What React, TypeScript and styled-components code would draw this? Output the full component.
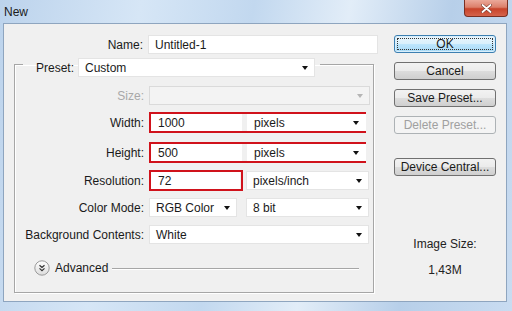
import styled, { createGlobalStyle } from 'styled-components'

const GlobalStyle = createGlobalStyle`
  html, body {
    margin: 0;
    padding: 0;
    background: #b9d1ea;
  }
  body {
    font-family: "Liberation Sans", Arial, sans-serif;
    font-size: 12px;
    color: #1a1a1a;
  }
`

const Window = styled.div`
  width: 512px;
  height: 311px;
  box-sizing: border-box;
  display: flex;
  flex-direction: column;
  padding: 0 5px 9px 3px;
  background: linear-gradient(100deg, #bcd3ec 0%, #d6e6f6 25%, #c2d8ef 45%, #e2edf8 62%, #b7cfe9 80%, #c9dcf1 100%);
`

const TitleBar = styled.div`
  height: 23px;
  display: flex;
  align-items: flex-start;
  justify-content: space-between;
`

const Title = styled.span`
  padding: 5px 0 0 1px;
  font-size: 12px;
  color: #1b1b1b;
`

const CloseButton = styled.div`
  width: 44px;
  height: 17px;
  margin-right: -1px;
  box-sizing: border-box;
  border: 1px solid #7a2f22;
  border-top: none;
  border-radius: 0 0 4px 4px;
  background: linear-gradient(#eba99a 0%, #dc7f6a 45%, #c8432a 55%, #d5634b 100%);
  display: flex;
  align-items: center;
  justify-content: center;
`

const Panel = styled.div`
  flex: 1;
  display: flex;
  background: #f0f0f0;
  border: 1px solid #8ea5bf;
  padding: 11px 0 0 10px;
`

const Main = styled.div`
  width: 364px;
  display: flex;
  flex-direction: column;
`

const Row = styled.div<{ $mt?: number }>`
  display: grid;
  grid-template-columns: 129px 1fr;
  column-gap: 5px;
  align-items: center;
  margin-top: ${p => p.$mt ?? 0}px;
`

const Label = styled.span<{ $disabled?: boolean }>`
  text-align: right;
  white-space: nowrap;
  color: ${p => (p.$disabled ? '#a8a8a8' : '#1a1a1a')};
`

const Field = styled.div<{ $w?: number; $disabled?: boolean }>`
  height: 19px;
  box-sizing: border-box;
  width: ${p => (p.$w ? `${p.$w}px` : 'auto')};
  flex: ${p => (p.$w ? 'none' : '1')};
  background: ${p => (p.$disabled ? '#f3f3f3' : '#ffffff')};
  border: 1px solid ${p => (p.$disabled ? '#dadada' : '#e4e4e4')};
  display: flex;
  align-items: center;
  padding: 0 6px 0 6px;
  color: #1a1a1a;
  white-space: nowrap;
`

const Value = styled.span`
  flex: 1;
`

const Arrow = styled.span<{ $disabled?: boolean }>`
  width: 0;
  height: 0;
  border-left: 3.5px solid transparent;
  border-right: 3.5px solid transparent;
  border-top: 4px solid ${p => (p.$disabled ? '#b5b5b5' : '#111')};
`

const Controls = styled.div<{ $gap: number }>`
  display: flex;
  align-items: center;
  gap: ${p => p.$gap}px;
`

const RedBox = styled.div<{ $w: number }>`
  width: ${p => p.$w}px;
  height: 21px;
  box-sizing: border-box;
  border: 2px solid #d0121b;
  display: flex;
  align-items: center;
  gap: 5px;
  padding: 0 1px 0 0;

  & > div {
    height: 17px;
    border-color: #ffffff;
  }
`

const Group = styled.fieldset`
  margin: -3px 4px 0 0;
  padding: 0;
  border: 1px solid #a6a6a6;
  box-shadow: 1px 1px 0 #ffffff, inset 1px 1px 0 #ffffff;
  min-width: 0;
`

const Legend = styled.legend`
  margin-left: 8px;
  padding: 7px 5px 0 13px;
  display: flex;
  align-items: center;
  gap: 4px;
`

const GroupBody = styled.div`
  display: flex;
  flex-direction: column;
  padding: 0 5px 16px 0;
`

const AdvancedRow = styled.div`
  display: flex;
  align-items: center;
  margin-top: 16px;
  padding: 0 9px 0 19px;
  height: 16px;
`

const AdvancedText = styled.span`
  margin-left: 5px;
  margin-right: 4px;
`

const Rule = styled.div`
  flex: 1;
  height: 1px;
  background: #a6a6a6;
  box-shadow: 0 1px 0 #ffffff;
`

const Side = styled.div`
  width: 102px;
  margin-left: 16px;
  display: flex;
  flex-direction: column;
`

const Button = styled.div<{ $default?: boolean; $disabled?: boolean; $mt?: number }>`
  height: 18px;
  box-sizing: border-box;
  margin-top: ${p => p.$mt ?? 0}px;
  border: 1px solid ${p => (p.$default ? '#3c7fb1' : p.$disabled ? '#adb2b5' : '#707070')};
  border-radius: 3px;
  background: ${p =>
    p.$default
      ? 'linear-gradient(#eaf6fd 0%, #d9f0fc 50%, #bee6fd 51%, #a7d9f5 100%)'
      : p.$disabled
        ? '#f4f4f4'
        : 'linear-gradient(#f2f2f2 0%, #ebebeb 50%, #dddddd 51%, #cfcfcf 100%)'};
  color: ${p => (p.$disabled ? '#a0a0a0' : '#1a1a1a')};
  display: flex;
  align-items: center;
  justify-content: center;
  position: relative;
  ${p =>
    p.$default &&
    `
    box-shadow: inset 0 0 0 1px #d8eefb;
    &::after {
      content: '';
      position: absolute;
      inset: 2px;
      border: 1px dotted #333;
    }
  `}
`

const Info = styled.div`
  margin-top: 61px;
  display: flex;
  flex-direction: column;
  align-items: center;
  gap: 12px;
  color: #222;
`

function Select({ value, w, disabled }: { value?: string; w?: number; disabled?: boolean }) {
  return (
    <Field $w={w} $disabled={disabled}>
      <Value>{value}</Value>
      <Arrow $disabled={disabled} />
    </Field>
  )
}

function AdvancedIcon() {
  return (
    <svg width="16" height="16" viewBox="0 0 16 16">
      <defs>
        <linearGradient id="adv" x1="0" y1="0" x2="0" y2="1">
          <stop offset="0" stopColor="#ffffff" />
          <stop offset="1" stopColor="#dcdcdc" />
        </linearGradient>
      </defs>
      <circle cx="8" cy="8" r="7.2" fill="url(#adv)" stroke="#9a9a9a" strokeWidth="1" />
      <path d="M5.5 5.2 L8 7.4 L10.5 5.2 M5.5 8.4 L8 10.6 L10.5 8.4" fill="none" stroke="#333" strokeWidth="1.2" />
    </svg>
  )
}

export default function App() {
  return (
    <>
      <GlobalStyle />
      <Window>
        <TitleBar>
          <Title>New</Title>
          <CloseButton>
            <svg width="11" height="9" viewBox="0 0 11 9">
              <path d="M1.5 1 L9.5 8 M9.5 1 L1.5 8" stroke="#7a3a2e" strokeWidth="3" strokeLinecap="round" />
              <path d="M1.5 1 L9.5 8 M9.5 1 L1.5 8" stroke="#ffffff" strokeWidth="1.8" strokeLinecap="round" />
            </svg>
          </CloseButton>
        </TitleBar>
        <Panel>
          <Main>
            <Row>
              <Label>Name:</Label>
              <Field>Untitled-1</Field>
            </Row>
            <Group>
              <Legend>
                <Label>Preset:</Label>
                <Select value="Custom" w={237} />
              </Legend>
              <GroupBody>
                <Row $mt={9}>
                  <Label $disabled>Size:</Label>
                  <Select disabled w={221} />
                </Row>
                <Row $mt={7}>
                  <Label>Width:</Label>
                  <RedBox $w={217}>
                    <Field $w={91}>1000</Field>
                    <Select value="pixels" w={119} />
                  </RedBox>
                </Row>
                <Row $mt={9}>
                  <Label>Height:</Label>
                  <RedBox $w={217}>
                    <Field $w={91}>500</Field>
                    <Select value="pixels" w={119} />
                  </RedBox>
                </Row>
                <Row $mt={7}>
                  <Label>Resolution:</Label>
                  <Controls $gap={3}>
                    <RedBox $w={94}>
                      <Field>72</Field>
                    </RedBox>
                    <Select value="pixels/inch" w={123} />
                  </Controls>
                </Row>
                <Row $mt={7}>
                  <Label>Color Mode:</Label>
                  <Controls $gap={9}>
                    <Select value="RGB Color" w={88} />
                    <Select value="8 bit" w={123} />
                  </Controls>
                </Row>
                <Row $mt={8}>
                  <Label>Background Contents:</Label>
                  <Select value="White" w={220} />
                </Row>
                <AdvancedRow>
                  <AdvancedIcon />
                  <AdvancedText>Advanced</AdvancedText>
                  <Rule />
                </AdvancedRow>
              </GroupBody>
            </Group>
          </Main>
          <Side>
            <Button $default>OK</Button>
            <Button $mt={9}>Cancel</Button>
            <Button $mt={9}>Save Preset...</Button>
            <Button $mt={9} $disabled>Delete Preset...</Button>
            <Button $mt={24}>Device Central...</Button>
            <Info>
              <span>Image Size:</span>
              <span>1,43M</span>
            </Info>
          </Side>
        </Panel>
      </Window>
    </>
  )
}
